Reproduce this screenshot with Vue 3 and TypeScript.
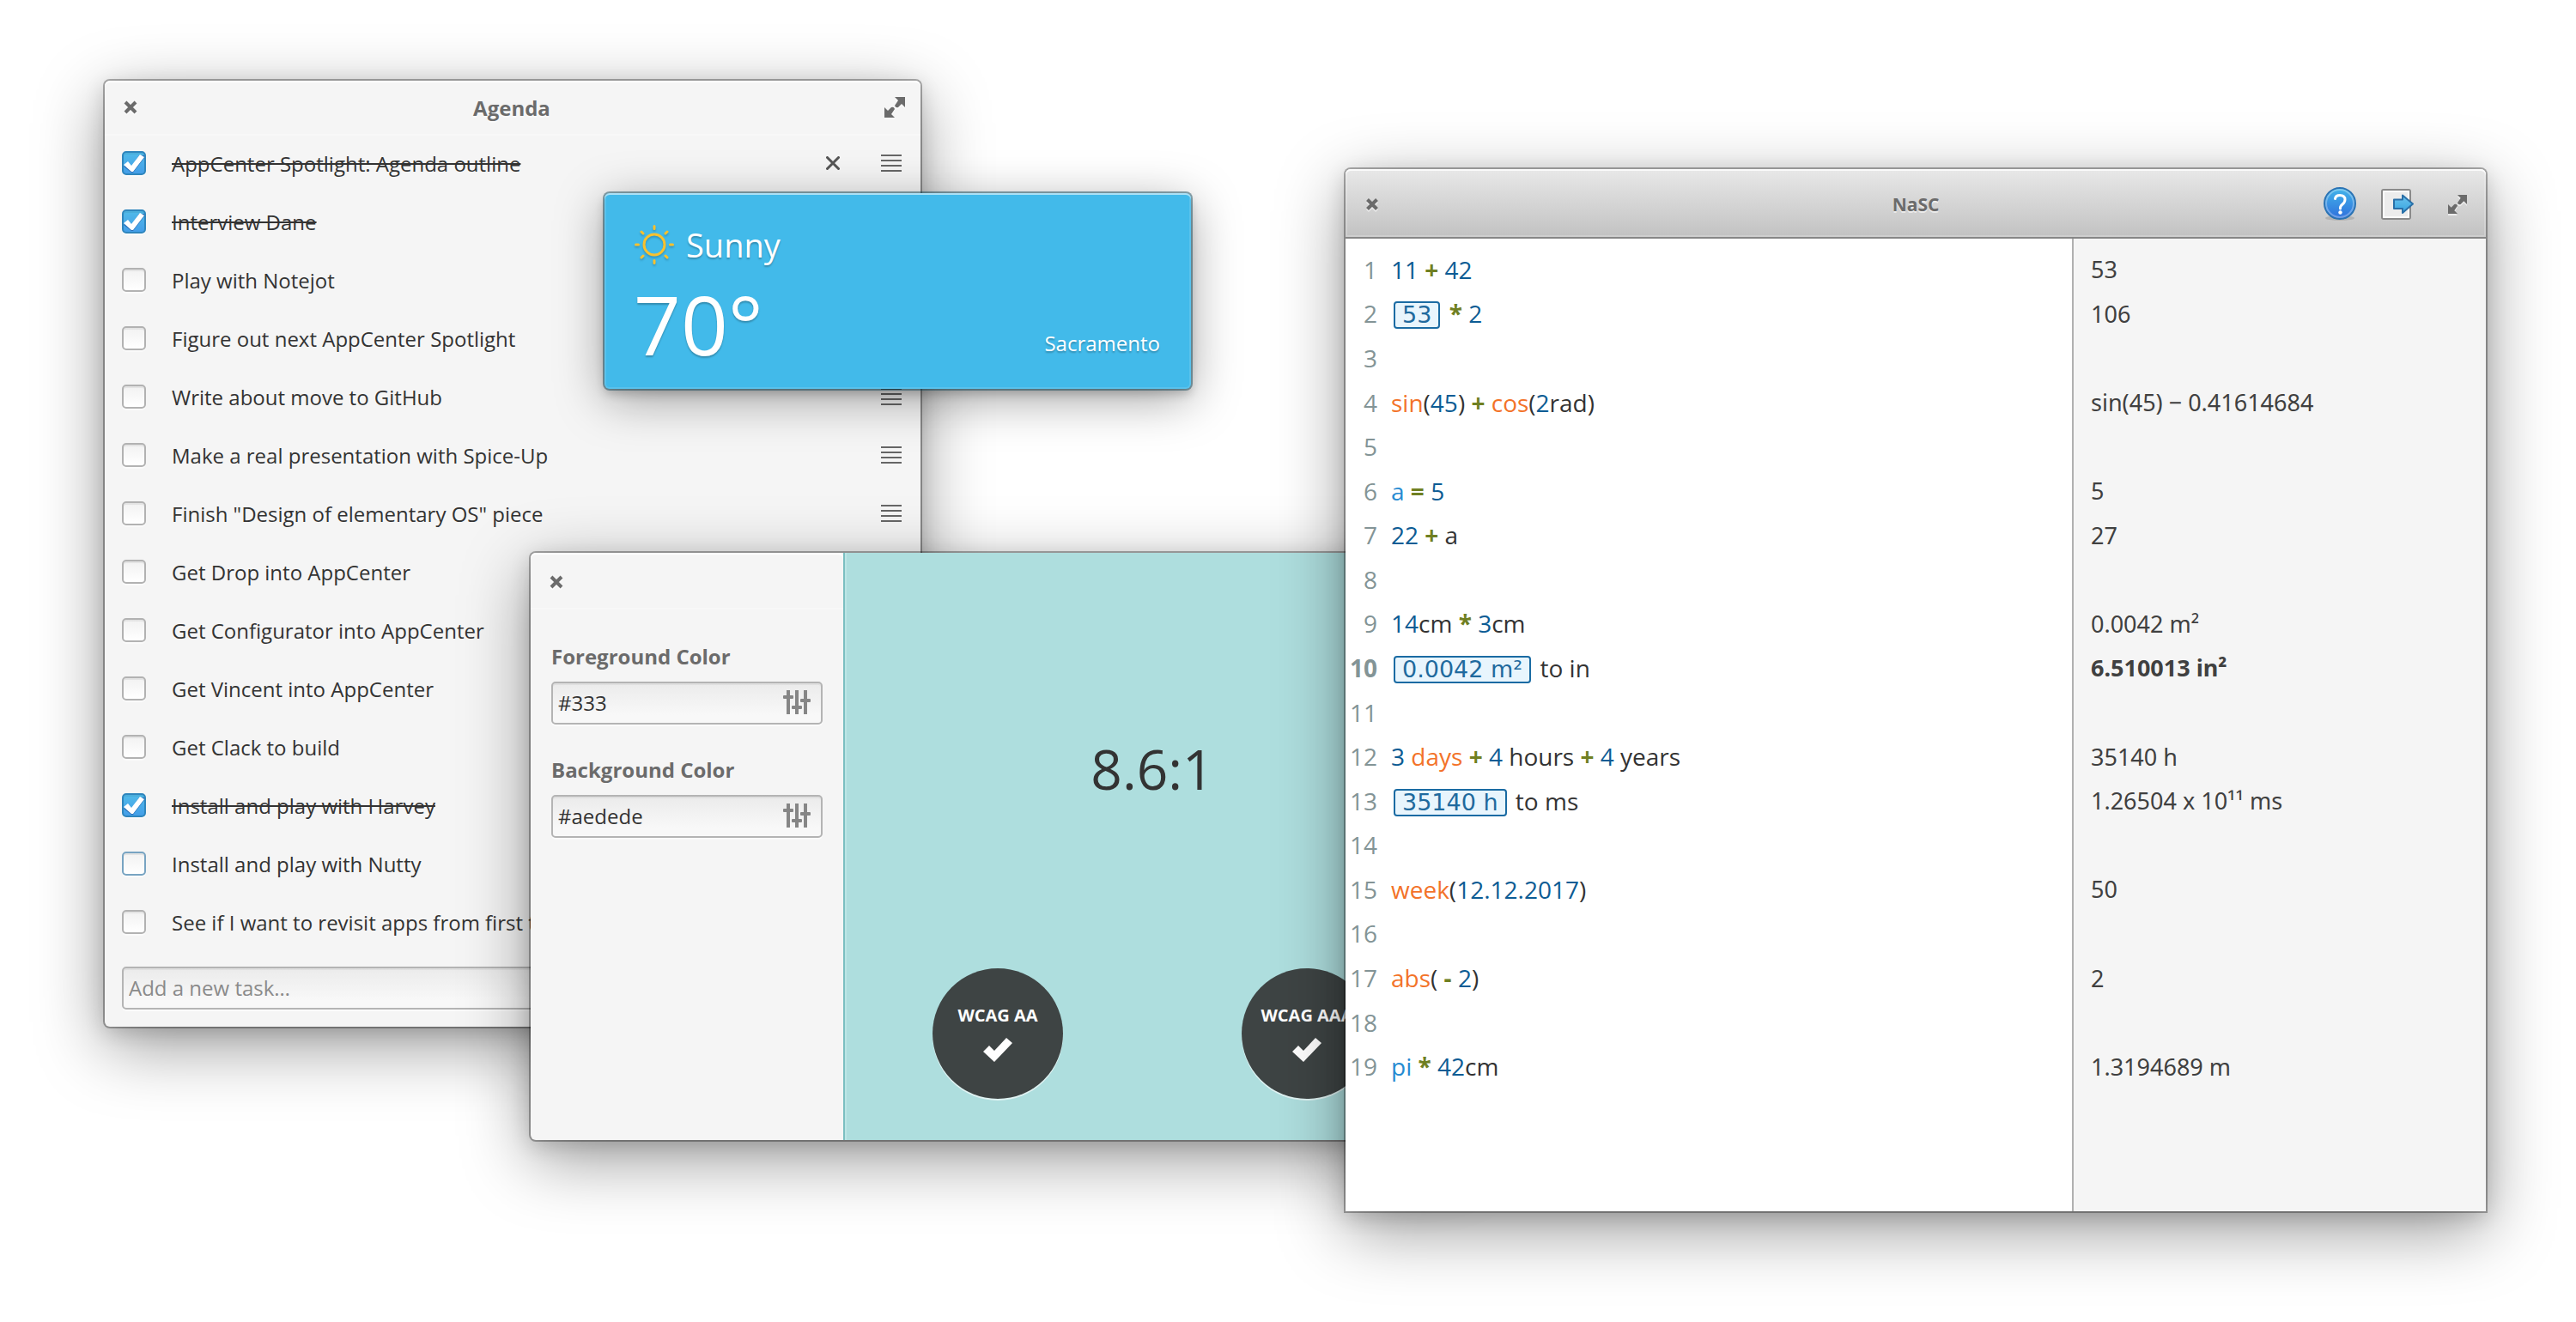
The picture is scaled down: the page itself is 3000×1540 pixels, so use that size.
<script setup lang="ts">
import { ref } from 'vue'

interface Task {
  title: string
  done: boolean
  hovered?: boolean
  focused?: boolean
}

type Kind = 'num' | 'op' | 'fn' | 'var' | 'chip' | 'txt'
type Token = [Kind, string]

interface Line {
  tokens: Token[]
  result: string
}

const tasks = ref<Task[]>([
  { title: 'AppCenter Spotlight: Agenda outline', done: true, hovered: true },
  { title: 'Interview Dane', done: true },
  { title: 'Play with Notejot', done: false },
  { title: 'Figure out next AppCenter Spotlight', done: false },
  { title: 'Write about move to GitHub', done: false },
  { title: 'Make a real presentation with Spice-Up', done: false },
  { title: 'Finish "Design of elementary OS" piece', done: false },
  { title: 'Get Drop into AppCenter', done: false },
  { title: 'Get Configurator into AppCenter', done: false },
  { title: 'Get Vincent into AppCenter', done: false },
  { title: 'Get Clack to build', done: false },
  { title: 'Install and play with Harvey', done: true },
  { title: 'Install and play with Nutty', done: false, focused: true },
  { title: 'See if I want to revisit apps from first t', done: false },
])

const newTask = ref('')
const foreground = ref('#333')
const background = ref('#aedede')
const badges = ['WCAG AA', 'WCAG AAA']

const currentLine = 10
const lines: Line[] = [
  { tokens: [['num', '11'], ['op', ' + '], ['num', '42']], result: '53' },
  { tokens: [['chip', '53'], ['op', ' * '], ['num', '2']], result: '106' },
  { tokens: [], result: '' },
  {
    tokens: [['fn', 'sin'], ['txt', '('], ['num', '45'], ['txt', ')'], ['op', ' + '], ['fn', 'cos'], ['txt', '('], ['num', '2'], ['txt', 'rad)']],
    result: 'sin(45) − 0.41614684',
  },
  { tokens: [], result: '' },
  { tokens: [['var', 'a'], ['op', ' = '], ['num', '5']], result: '5' },
  { tokens: [['num', '22'], ['op', ' + '], ['txt', 'a']], result: '27' },
  { tokens: [], result: '' },
  { tokens: [['num', '14'], ['txt', 'cm'], ['op', ' * '], ['num', '3'], ['txt', 'cm']], result: '0.0042 m²' },
  { tokens: [['chip', '0.0042 m²'], ['txt', ' to in']], result: '6.510013 in²' },
  { tokens: [], result: '' },
  {
    tokens: [['num', '3 '], ['fn', 'days'], ['op', ' + '], ['num', '4'], ['txt', ' hours'], ['op', ' + '], ['num', '4'], ['txt', ' years']],
    result: '35140 h',
  },
  { tokens: [['chip', '35140 h'], ['txt', ' to ms']], result: '1.26504 x 10¹¹ ms' },
  { tokens: [], result: '' },
  { tokens: [['fn', 'week'], ['txt', '('], ['num', '12.12.2017'], ['txt', ')']], result: '50' },
  { tokens: [], result: '' },
  { tokens: [['fn', 'abs'], ['txt', '('], ['op', ' - '], ['num', '2'], ['txt', ')']], result: '2' },
  { tokens: [], result: '' },
  { tokens: [['var', 'pi'], ['op', ' * '], ['num', '42'], ['txt', 'cm']], result: '1.3194689 m' },
]
</script>

<template>
  <main class="desktop">
    <section class="window agenda" aria-label="Agenda">
      <header class="titlebar">
        <button class="icon-button" type="button" aria-label="Close">
          <svg class="glyph" width="20" height="20" viewBox="0 0 20 20"><path d="M4 4l12 12M16 4L4 16" stroke="#6b6b6b" stroke-width="4" /></svg>
        </button>
        <h1 class="title">Agenda</h1>
        <button class="icon-button" type="button" aria-label="Maximize">
          <svg class="glyph" width="24" height="24" viewBox="0 0 24 24" fill="#6b6b6b"><path d="M12 0h12v12l-4-4-4 4q-3 1-4-2l4-6z" /><path d="M12 24H0V12l4 4 4-4q3-1 4 2l-4 6z" /></svg>
        </button>
      </header>
      <ul class="tasks">
        <li v-for="(task, i) in tasks" :key="i" class="task">
          <span class="tick">
            <input :id="`task-${i}`" v-model="task.done" type="checkbox" class="box" :class="{ focused: task.focused }">
            <svg v-if="task.done" class="mark" width="28" height="28" viewBox="0 0 28 28">
              <path d="M2 17l5-5 4 5L20 4h6v3L13 24h-2z" fill="#2a6fb8" transform="translate(0 1)" />
              <path d="M2 16l5-4 4 5L21 4l5 3-13 17h-2z" fill="#fff" />
            </svg>
          </span>
          <label class="task-title" :class="{ done: task.done }" :for="`task-${i}`">{{ task.title }}</label>
          <button v-if="task.hovered" class="icon-button" type="button" aria-label="Remove task">
            <svg width="16" height="16" viewBox="0 0 16 16"><path d="M1.500 1.500l13 13M14.500 1.500l-13 13" stroke="#555" stroke-width="3" stroke-linecap="round" /></svg>
          </button>
          <svg class="handle" width="24" height="20" viewBox="0 0 24 20" fill="#666"><path d="M0 0h24v2H0zM0 6h24v2H0zM0 12h24v2H0zM0 18h24v2H0z" /></svg>
        </li>
      </ul>
      <input v-model="newTask" class="entry new-task" type="text" placeholder="Add a new task…" aria-label="Add a new task">
    </section>

    <section class="window weather" aria-label="Weather">
      <div class="conditions">
        <svg class="sun" width="48" height="48" viewBox="0 0 48 48" fill="none" stroke="#f9c12e" stroke-width="3" stroke-linecap="round">
          <circle cx="24" cy="24" r="12" />
          <path d="M24 2.500v3M24 42.500v3M2.500 24h3M42.500 24h3M9 9l2 2M37 37l2 2M39 9l-2 2M11 37l-2 2" />
        </svg>
        <span class="sky">Sunny</span>
      </div>
      <div class="reading">
        <span class="degrees">70°</span>
        <span class="city">Sacramento</span>
      </div>
    </section>

    <section class="window contrast" aria-label="Contrast checker">
      <aside class="sidebar">
        <header class="titlebar">
          <button class="icon-button" type="button" aria-label="Close">
            <svg class="glyph" width="20" height="20" viewBox="0 0 20 20"><path d="M4 4l12 12M16 4L4 16" stroke="#6b6b6b" stroke-width="4" /></svg>
          </button>
        </header>
        <div class="fields">
          <div class="field">
            <label for="foreground">Foreground Color</label>
            <div class="picker">
              <input id="foreground" v-model="foreground" class="entry" type="text">
              <button class="icon-button" type="button" aria-label="Pick foreground color">
                <svg width="32" height="28" viewBox="0 0 32 28" fill="#868686"><path d="M4 0h4v28H4zM14 0h4v28h-4zM24 0h4v28h-4z" /><rect y="6" width="12" height="4" rx="1" /><rect x="10" y="18" width="12" height="4" rx="1" /><rect x="20" y="10" width="12" height="4" rx="1" /></svg>
              </button>
            </div>
          </div>
          <div class="field">
            <label for="background">Background Color</label>
            <div class="picker">
              <input id="background" v-model="background" class="entry" type="text">
              <button class="icon-button" type="button" aria-label="Pick background color">
                <svg width="32" height="28" viewBox="0 0 32 28" fill="#868686"><path d="M4 0h4v28H4zM14 0h4v28h-4zM24 0h4v28h-4z" /><rect y="6" width="12" height="4" rx="1" /><rect x="10" y="18" width="12" height="4" rx="1" /><rect x="20" y="10" width="12" height="4" rx="1" /></svg>
              </button>
            </div>
          </div>
        </div>
      </aside>
      <div class="preview">
        <output class="ratio">8.6:1</output>
        <div class="badges">
          <div v-for="badge in badges" :key="badge" class="slot">
            <div class="badge">
              <span>{{ badge }}</span>
              <svg width="34" height="28" viewBox="0 0 34 28"><path d="M0 16l7-7 6 6L27 0l7 6-21 22z" fill="#fff" /></svg>
            </div>
          </div>
        </div>
      </div>
    </section>

    <section class="window nasc" aria-label="NaSC">
      <header class="toolbar">
        <button class="icon-button" type="button" aria-label="Close">
          <svg class="glyph" width="18" height="18" viewBox="0 0 18 18"><path d="M3.500 3.500l11 11M14.500 3.500l-11 11" stroke="#6b6b6b" stroke-width="4" /></svg>
        </button>
        <h1 class="title">NaSC</h1>
        <div class="tools">
          <button class="icon-button" type="button" aria-label="Help">
            <svg width="38" height="40" viewBox="0 0 38 40">
              <defs>
                <linearGradient id="help-fill" x1="0" y1="0" x2="0" y2="1"><stop offset="0" stop-color="#43b5ea" /><stop offset="1" stop-color="#2f6fdc" /></linearGradient>
              </defs>
              <ellipse cx="19" cy="36" rx="17" ry="3" fill="#000" opacity=".12" />
              <circle cx="19" cy="19" r="18" fill="url(#help-fill)" stroke="#2a73b4" stroke-width="2" />
              <circle cx="19" cy="19" r="16" fill="none" stroke="#fff" stroke-opacity=".3" stroke-width="2" />
              <path d="M13.500 13.500q.5-4 5.500-4 6 0 6 5 0 3-3 5.500t-2.500 5" fill="none" stroke="#fff" stroke-width="3" stroke-linecap="round" />
              <circle cx="19.500" cy="29.500" r="2.200" fill="#fff" />
            </svg>
          </button>
          <button class="icon-button" type="button" aria-label="Export">
            <svg width="38" height="38" viewBox="0 0 38 38">
              <defs>
                <linearGradient id="arrow-fill" x1="0" y1="0" x2="0" y2="1"><stop offset="0" stop-color="#6cc4ee" /><stop offset="1" stop-color="#36a3e0" /></linearGradient>
              </defs>
              <rect x="1" y="2" width="33" height="34" rx="2" fill="#ececec" stroke="#8a8a8a" stroke-width="2" />
              <rect x="3" y="4" width="29" height="30" fill="none" stroke="#fff" stroke-opacity=".8" stroke-width="2" />
              <path d="M15 13.500h10V8.500L37 18.500 25 29V24H15z" fill="url(#arrow-fill)" stroke="#2a70a8" stroke-width="2" stroke-linejoin="round" />
            </svg>
          </button>
          <button class="icon-button" type="button" aria-label="Maximize">
            <svg class="glyph" width="22" height="22" viewBox="0 0 24 24" fill="#6b6b6b"><path d="M12 0h12v12l-4-4-4 4q-3 1-4-2l4-6z" /><path d="M12 24H0V12l4 4 4-4q3-1 4 2l-4 6z" /></svg>
          </button>
        </div>
      </header>
      <div class="sheet">
        <ol class="rows editor">
          <li v-for="(line, i) in lines" :key="i" class="line">
            <span class="gutter" :class="{ current: i + 1 === currentLine }">{{ i + 1 }}</span>
            <code class="source"><span v-for="(token, t) in line.tokens" :key="t" :class="token[0]">{{ token[1] }}</span></code>
          </li>
        </ol>
        <ol class="rows results">
          <li v-for="(line, i) in lines" :key="i" class="line" :class="{ current: i + 1 === currentLine }">{{ line.result }}</li>
        </ol>
      </div>
    </section>
  </main>
</template>

<style>
body {
  margin: 0;
  background: #fff;
}
</style>

<style scoped>
.desktop {
  position: relative;
  min-height: 100vh;
  overflow: hidden;
  background: #fff;
  color: #333;
  font-family: "Open Sans", "Noto Sans", sans-serif;
  font-size: 24px;
}

h1,
ul,
ol {
  margin: 0;
  padding: 0;
  list-style: none;
}

.window {
  position: absolute;
  border-radius: 6px;
  background: #f5f5f5;
  box-shadow:
    0 0 0 2px rgba(0, 0, 0, 0.3),
    0 6px 24px rgba(0, 0, 0, 0.16),
    0 22px 80px rgba(0, 0, 0, 0.4);
}

.icon-button {
  display: flex;
  align-items: center;
  justify-content: center;
  padding: 0;
  border: 0;
  background: none;
}

.glyph {
  filter: drop-shadow(0 2px 0 rgba(255, 255, 255, 0.6));
}

.title {
  flex: 1;
  text-align: center;
  font-size: 24px;
  font-weight: 700;
  color: #6b6b6b;
  text-shadow: 0 2px 0 rgba(255, 255, 255, 0.6);
}

.titlebar {
  display: flex;
  align-items: center;
  border-radius: 6px 6px 0 0;
  box-shadow:
    inset 0 2px 0 #fff,
    0 2px 0 #f8f8f8;
}

/* Agenda */
.agenda {
  left: 122px;
  top: 94px;
  width: 950px;
  display: flex;
  flex-direction: column;
}

.agenda .titlebar {
  height: 62px;
  padding: 0 18px 0 20px;
  box-sizing: border-box;
}

.task {
  display: flex;
  align-items: center;
  height: 68px;
  padding: 0 22px 0 20px;
}

.tick {
  display: grid;
  margin-right: 30px;
}

.box,
.mark {
  grid-area: 1 / 1;
}

.mark {
  pointer-events: none;
}

.box {
  appearance: none;
  width: 28px;
  height: 28px;
  margin: 0;
  border: 2px solid #b2b2b2;
  border-radius: 5px;
  background: linear-gradient(#f2f2f2, #fff);
  box-shadow:
    inset 0 2px 0 rgba(0, 0, 0, 0.06),
    0 2px 0 rgba(255, 255, 255, 0.5);
}

.box.focused {
  border-color: #78a4c2;
}

.box:checked {
  border-color: #2f86bd;
  background: linear-gradient(#50bae9, #449ee8);
}

.task-title {
  flex: 1;
  padding-top: 2px;
  line-height: 34px;
}

.done {
  text-decoration: line-through;
  text-decoration-thickness: 2px;
}

.handle {
  margin-left: 48px;
}

.entry {
  box-sizing: border-box;
  height: 50px;
  padding: 0 6px 2px;
  border: 2px solid #b4b4b4;
  border-radius: 5px;
  background: linear-gradient(#ebebeb, #f8f8f8 80%);
  box-shadow:
    inset 0 2px 0 rgba(0, 0, 0, 0.05),
    0 2px 0 rgba(255, 255, 255, 0.6);
  color: #333;
  font: inherit;
}

.entry::placeholder {
  color: #8a8a8a;
  opacity: 1;
}

.new-task {
  margin: 18px 20px 20px;
}

/* Weather */
.weather {
  left: 704px;
  top: 225px;
  width: 683px;
  height: 228px;
  box-sizing: border-box;
  padding: 32px 36px 0 34px;
  background: #42baea;
  color: #fff;
  text-shadow: 0 2px 2px rgba(0, 0, 0, 0.25);
  box-shadow:
    inset 0 2px 0 rgba(255, 255, 255, 0.5),
    inset 0 0 0 2px rgba(255, 255, 255, 0.12),
    0 0 0 2px rgba(0, 60, 80, 0.45),
    0 6px 12px rgba(0, 0, 0, 0.2),
    0 12px 56px rgba(0, 0, 0, 0.36);
}

.conditions {
  display: flex;
  align-items: center;
  gap: 13px;
}

.sun {
  filter: drop-shadow(0 2px 1px rgba(0, 0, 0, 0.2));
}

.sky {
  font-size: 38px;
  line-height: 56px;
}

.reading {
  display: flex;
  align-items: center;
  justify-content: space-between;
}

.degrees {
  font-size: 96px;
  line-height: 128px;
}

.city {
  line-height: 34px;
  padding-top: 46px;
}

/* Contrast checker */
.contrast {
  left: 618px;
  top: 644px;
  width: 1084px;
  display: flex;
}

.sidebar {
  flex: none;
  width: 364px;
}

.sidebar .titlebar {
  height: 64px;
  padding: 4px 20px 0;
  box-sizing: border-box;
}

.fields {
  display: flex;
  flex-direction: column;
  gap: 36px;
  padding: 40px 24px;
}

.field {
  display: flex;
  flex-direction: column;
  gap: 12px;
  line-height: 34px;
}

.field label {
  font-weight: 700;
  color: #6b6b6b;
}

.picker {
  display: grid;
  grid-template-columns: minmax(0, 1fr);
  align-items: center;
}

.picker > * {
  grid-area: 1 / 1;
}

.picker .icon-button {
  justify-self: end;
  margin-right: 14px;
  margin-bottom: 2px;
}

.preview {
  flex: 1;
  display: flex;
  flex-direction: column;
  height: 684px;
  border-radius: 0 6px 6px 0;
  background: #aedede;
  box-shadow:
    inset 2px 0 0 #7bbfc1,
    inset 4px 0 0 #bce5e5;
}

.ratio {
  flex: 1;
  display: flex;
  align-items: center;
  justify-content: center;
  padding-top: 18px;
  font-size: 64px;
}

.badges {
  display: flex;
  padding-bottom: 48px;
}

.slot {
  flex: 1;
  display: flex;
  justify-content: center;
}

.badge {
  display: flex;
  flex-direction: column;
  align-items: center;
  justify-content: center;
  gap: 12px;
  box-sizing: border-box;
  width: 152px;
  height: 152px;
  padding-bottom: 2px;
  border-radius: 50%;
  background: #3e4444;
  box-shadow: 0 2px 0 rgba(255, 255, 255, 0.6);
  color: #fff;
  font-size: 20px;
  font-weight: 700;
  line-height: 28px;
}

/* NaSC */
.nasc {
  left: 1567px;
  right: 105px;
  top: 197px;
  border-radius: 6px 6px 0 0;
}

.toolbar {
  display: grid;
  grid-template-columns: 1fr auto 1fr;
  align-items: center;
  height: 81px;
  box-sizing: border-box;
  padding: 2px 22px 0;
  border-bottom: 2px solid #868686;
  border-radius: 6px 6px 0 0;
  background: linear-gradient(#e8e8e8, #c2c2c2);
  box-shadow:
    inset 0 2px 0 rgba(255, 255, 255, 0.8),
    inset 0 0 0 2px rgba(255, 255, 255, 0.2);
}

.toolbar > .icon-button {
  justify-self: start;
}

.toolbar .title {
  font-size: 21px;
}

.tools {
  display: flex;
  align-items: center;
  justify-content: flex-end;
}

.tools .icon-button + .icon-button {
  margin-left: 29px;
}

.tools .icon-button + .icon-button + .icon-button {
  margin-left: 40px;
}

.sheet {
  display: grid;
  grid-template-columns: 1fr 482px;
}

.rows {
  display: grid;
  grid-template-rows: repeat(19, 1fr);
  height: 980px;
  padding: 10px 0 143px;
}

.line {
  display: flex;
  align-items: center;
  white-space: pre;
}

.editor {
  background: #fff;
  font-size: 28px;
}

.gutter {
  width: 37px;
  margin-right: 16px;
  text-align: right;
  color: #839496;
}

.gutter.current,
.results .current {
  font-weight: 700;
}

.source {
  font-family: inherit;
}

.results {
  padding-left: 20px;
  border-left: 2px solid #b0b0b0;
  background: #f5f5f5;
  color: #404040;
  font-family: "Noto Sans", "Open Sans", sans-serif;
  font-size: 27px;
}

.num {
  color: #0d5c94;
}

.op {
  font-weight: 700;
  color: #6f7f22;
}

.fn {
  color: #f37329;
}

.var {
  color: #268bd2;
}

.chip {
  display: inline-block;
  margin: 0 3px;
  padding: 0 8px;
  border: 2px solid #1a6ba3;
  border-radius: 4px;
  background: #e8f5fd;
  color: #1f6a9e;
  font-family: "DejaVu Sans", sans-serif;
  font-size: 27px;
  line-height: 28px;
}
</style>
